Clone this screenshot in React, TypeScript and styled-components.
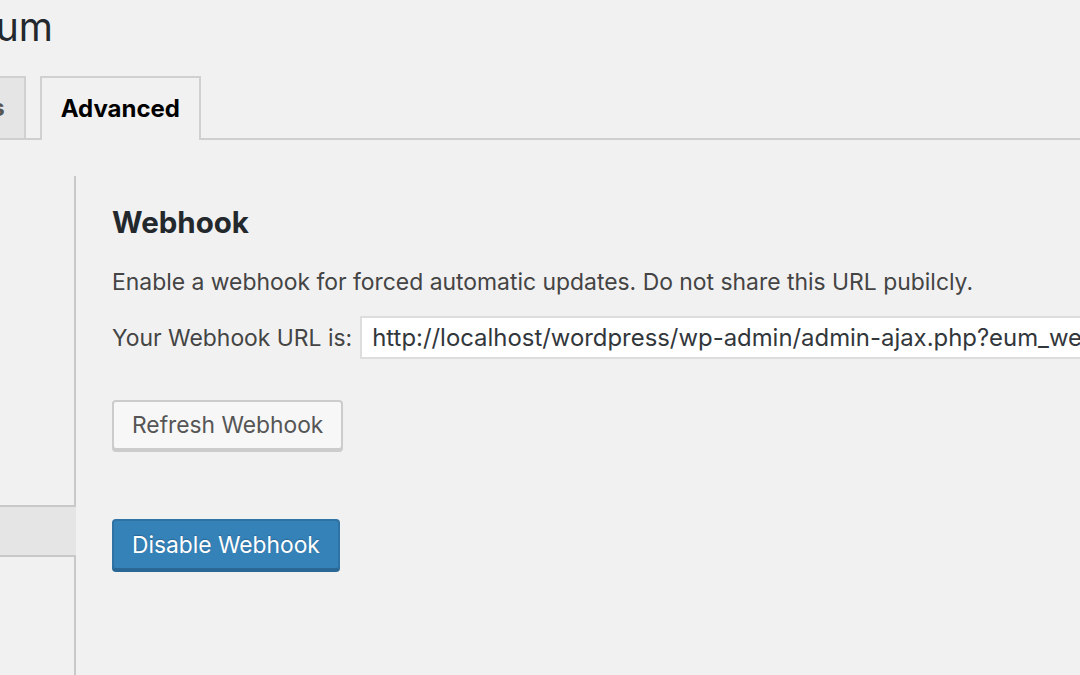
import React from "react";
import styled, { createGlobalStyle } from "styled-components";

const Global = createGlobalStyle`
  html, body { margin: 0; padding: 0; background: #f1f1f1; }
  body {
    width: 1080px; height: 675px; overflow: hidden;
    font-family: Inter, "Liberation Sans", Arial, sans-serif;
    color: #444;
    -webkit-font-smoothing: antialiased;
  }
  #root { height: 675px; }
`;

const Page = styled.div`
  display: flex;
  flex-direction: column;
  height: 675px;
`;

const TitleRow = styled.div`
  width: 53px;
  height: 76px;
  display: flex;
  justify-content: flex-end;
  align-items: flex-start;
`;

const Title = styled.h1`
  margin: 0;
  padding-top: 2px;
  flex-shrink: 0;
  white-space: nowrap;
  font-size: 39px;
  font-weight: 400;
  line-height: 50px;
  color: #23282d;
`;

const TabBar = styled.nav`
  display: flex;
  border-bottom: 2px solid #cfcfcf;
  height: 62px;
`;

const TabGroup = styled.div`
  width: 201px;
  display: flex;
  justify-content: flex-end;
  align-items: flex-end;
  gap: 14px;
`;

const Tab = styled.a<{ $active?: boolean }>`
  flex-shrink: 0;
  box-sizing: border-box;
  height: ${(p) => (p.$active ? "64px" : "62px")};
  margin-bottom: ${(p) => (p.$active ? "-2px" : "0")};
  padding: 0 19px 2px;
  display: flex;
  align-items: center;
  border: 2px solid #d0d0d0;
  border-bottom: none;
  background: ${(p) => (p.$active ? "#f1f1f1" : "#e5e5e5")};
  color: ${(p) => (p.$active ? "#000" : "#555")};
  font-size: 24px;
  font-weight: 700;
  text-decoration: none;
`;

const Main = styled.div`
  flex: 1;
  display: flex;
  margin-top: 36px;
`;

const Sidebar = styled.div`
  width: 76px;
  display: flex;
  justify-content: flex-end;
  flex-shrink: 0;
`;

const NavList = styled.ul`
  width: 300px;
  flex-shrink: 0;
  margin: 0;
  padding: 0;
  list-style: none;
  border-right: 2px solid #c8c8c8;
`;

const NavItem = styled.li<{ $active?: boolean }>`
  box-sizing: border-box;
  height: ${(p) => (p.$active ? "52px" : "47px")};
  padding-left: 16px;
  display: flex;
  align-items: center;
  font-size: 20px;
  color: #0073aa;
  white-space: nowrap;
  background: ${(p) => (p.$active ? "#e5e5e5" : "transparent")};
  border-top: ${(p) => (p.$active ? "2px solid #c8c8c8" : "none")};
  border-bottom: ${(p) => (p.$active ? "2px solid #c8c8c8" : "none")};
  margin-right: ${(p) => (p.$active ? "-2px" : "0")};
`;

const Content = styled.section`
  flex: 1;
  min-width: 0;
  padding: 26px 0 0 36px;
  display: flex;
  flex-direction: column;
  align-items: flex-start;
`;

const Heading = styled.h2`
  margin: 0;
  font-size: 29.5px;
  line-height: 40px;
  font-weight: 700;
  color: #23282d;
`;

const Text = styled.p`
  margin: 25px 0 0;
  font-size: 22.9px;
  line-height: 30px;
  color: #444;
  white-space: nowrap;
`;

const UrlRow = styled.div`
  margin-top: 19px;
  display: flex;
  align-items: center;
  gap: 8px;
  white-space: nowrap;
`;

const Label = styled.label`
  font-size: 22.9px;
  color: #444;
`;

const UrlInput = styled.input`
  box-sizing: border-box;
  width: 760px;
  height: 43px;
  padding: 0 10px;
  border: 2px solid #ddd;
  background: #fff;
  font-family: inherit;
  font-size: 23.9px;
  color: #32373c;
  outline: none;
`;

const Button = styled.button<{ $primary?: boolean }>`
  box-sizing: border-box;
  height: ${(p) => (p.$primary ? "51px" : "50px")};
  padding: 0 18px 1px;
  border-radius: 4px;
  font-family: inherit;
  font-size: 22.8px;
  cursor: pointer;
  white-space: nowrap;
  margin-top: ${(p) => (p.$primary ? "69px" : "41px")};
  background: ${(p) => (p.$primary ? "#3582b8" : "#f7f7f7")};
  color: ${(p) => (p.$primary ? "#fff" : "#555")};
  border: 2px solid ${(p) => (p.$primary ? "#2e73a4" : "#ccc")};
  border-bottom-color: ${(p) => (p.$primary ? "#2a6794" : "#ccc")};
  box-shadow: 0 2px 0 ${(p) => (p.$primary ? "#2a6794" : "#ccc")};
  text-shadow: ${(p) => (p.$primary ? "0 -1px 1px #2a6794" : "none")};
`;

const navItems = [
  "Force updates",
  "Cron schedule",
  "Admin bar",
  "Anonymize",
  "Export settings",
  "Import settings",
  "Reset options",
];

export default function App() {
  return (
    <>
      <Global />
      <Page>
        <TitleRow>
          <Title>Easy Updates Manager Premium</Title>
        </TitleRow>
        <TabBar>
          <TabGroup>
            <Tab>General</Tab>
            <Tab>Plugins</Tab>
            <Tab>Themes</Tab>
            <Tab>Logs</Tab>
            <Tab $active>Advanced</Tab>
          </TabGroup>
        </TabBar>
        <Main>
          <Sidebar>
            <NavList>
              {navItems.map((n) => (
                <NavItem key={n}>{n}</NavItem>
              ))}
              <NavItem $active>Webhook</NavItem>
              <NavItem>Safe mode</NavItem>
              <NavItem>Delay updates</NavItem>
            </NavList>
          </Sidebar>
          <Content>
            <Heading>Webhook</Heading>
            <Text>
              Enable a webhook for forced automatic updates. Do not share this URL pubilcly.
            </Text>
            <UrlRow>
              <Label htmlFor="webhook-url">Your Webhook URL is:</Label>
              <UrlInput
                id="webhook-url"
                readOnly
                value="http://localhost/wordpress/wp-admin/admin-ajax.php?eum_webhook=8f2c1a9d4e"
              />
            </UrlRow>
            <Button>Refresh Webhook</Button>
            <Button $primary>Disable Webhook</Button>
          </Content>
        </Main>
      </Page>
    </>
  );
}
